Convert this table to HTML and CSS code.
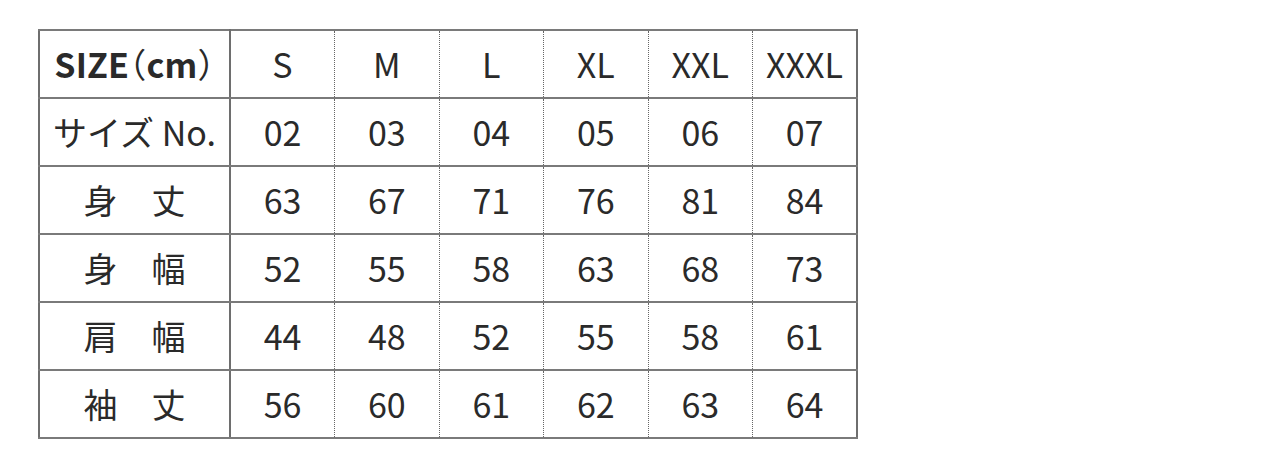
FILE: index.html
```html
<!DOCTYPE html>
<html lang="ja">
<head>
<meta charset="utf-8">
<title>サイズ表</title>
<link rel="stylesheet" href="styles.css">
</head>
<body>
<main class="page">
  <table class="size-table">
    <colgroup>
      <col class="col-label">
      <col class="col-size"><col class="col-size"><col class="col-size">
      <col class="col-size"><col class="col-size"><col class="col-size">
    </colgroup>
    <tbody>
      <tr>
        <th class="label label-head">SIZE<span class="paren">（</span>cm<span class="paren">）</span></th>
        <td>S</td><td>M</td><td>L</td><td>XL</td><td>XXL</td><td>XXXL</td>
      </tr>
      <tr>
        <th class="label">サイズ No.</th>
        <td>02</td><td>03</td><td>04</td><td>05</td><td>06</td><td>07</td>
      </tr>
      <tr>
        <th class="label">身　丈</th>
        <td>63</td><td>67</td><td>71</td><td>76</td><td>81</td><td>84</td>
      </tr>
      <tr>
        <th class="label">身　幅</th>
        <td>52</td><td>55</td><td>58</td><td>63</td><td>68</td><td>73</td>
      </tr>
      <tr>
        <th class="label">肩　幅</th>
        <td>44</td><td>48</td><td>52</td><td>55</td><td>58</td><td>61</td>
      </tr>
      <tr>
        <th class="label">袖　丈</th>
        <td>56</td><td>60</td><td>61</td><td>62</td><td>63</td><td>64</td>
      </tr>
    </tbody>
  </table>
</main>
</body>
</html>
```

FILE: styles.css
```css
html, body {
  margin: 0;
  padding: 0;
  background: #ffffff;
}

.page {
  padding: 29px 0 0 38px;
}

.size-table {
  border-collapse: collapse;
  table-layout: fixed;
  width: 820px;
  border: 2px solid #6e6e6e;
  font-family: "Noto Sans CJK JP", "Noto Sans", sans-serif;
  color: #2a2a2a;
}

.col-label {
  width: 191px;
}

.size-table tr {
  height: 68px;
}

.size-table th,
.size-table td {
  padding: 0;
  text-align: center;
  vertical-align: middle;
  font-size: 34px;
  font-weight: 400;
  line-height: 1;
  border-top: 2px solid #7a7a7a;
  border-bottom: 2px solid #7a7a7a;
  white-space: nowrap;
}

.size-table td {
  border-left: 1px dotted #666666;
  border-right: 1px dotted #666666;
}

.size-table .label {
  border-right: 2px solid #6e6e6e;
}

.size-table td:last-child {
  border-right: 2px solid #6e6e6e;
}

.size-table td:nth-child(2) {
  border-left: 2px solid #6e6e6e;
}

.size-table .label-head {
  font-weight: 700;
  letter-spacing: 0.2px;
}

.size-table .paren {
  font-weight: 400;
  font-feature-settings: "halt";
}
```
